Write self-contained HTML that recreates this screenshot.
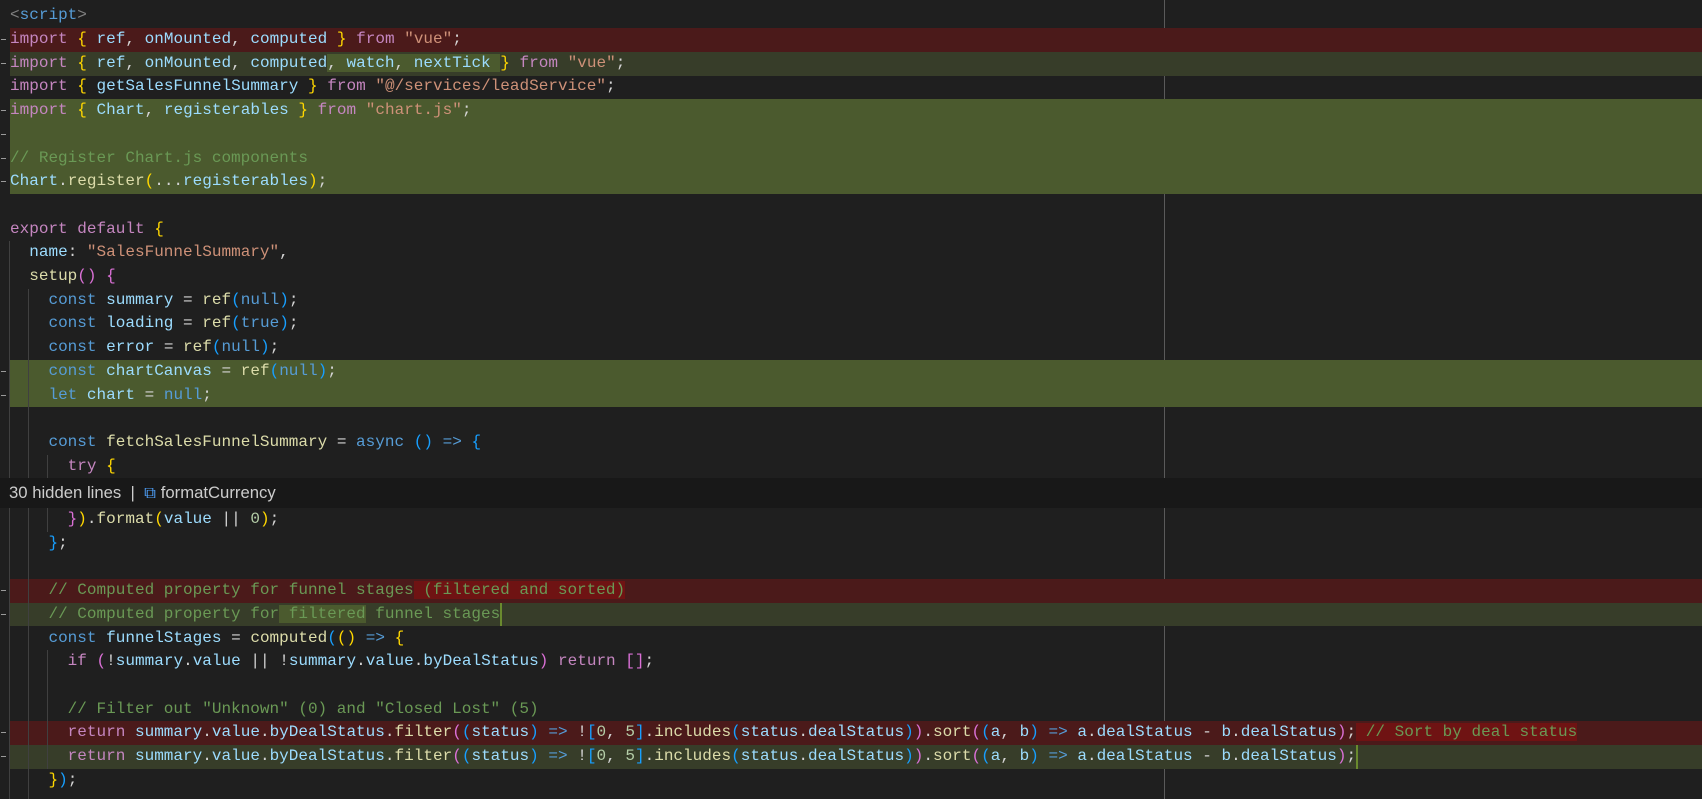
<!DOCTYPE html>
<html><head><meta charset="utf-8"><style>
html,body{margin:0;padding:0;background:#1f1f1f;width:1702px;height:799px;overflow:hidden}
body{position:relative;font-family:"Liberation Mono",monospace;font-size:16.02px;color:#d4d4d4}
.r{position:absolute;left:0;width:1702px;height:24.2px;line-height:23.7px;white-space:pre}
.r .bg{position:absolute;left:10px;right:0;top:0;bottom:0}
.r .t{position:absolute;left:10px;top:0}
.m{position:absolute;left:1px;top:11px;width:5px;height:1px;background:#9a9a9a}
.del .bg{background:#4b1a1a}.add .bg{background:#373d29}.ins .bg{background:#4b5a2e}
.hd{background:#6f1313}.ha{background:#4b5a2e}
.k{color:#c586c0}.b{color:#569cd6}.v{color:#9cdcfe}.f{color:#dcdcaa}.s{color:#ce9178}.c{color:#6a9955}.y{color:#ffd700}.p{color:#da70d6}.l{color:#179fff}.n{color:#b5cea8}.g{color:#808080}
.ig{position:absolute;width:1px;background:#404040}
.cur{display:inline-block;width:2px;height:23.7px;background:#6a8a2e;vertical-align:top}
</style></head><body>
<div class="ig" style="left:1164px;top:0;height:799px;background:#5a5a5a"></div>

<div class="r" style="top:4.3px"><span class="t"><span class="g">&lt;</span><span class="b">script</span><span class="g">&gt;</span></span></div>
<div class="r del" style="top:28px"><span class="m"></span><div class="bg"></div><span class="t"><span class="k">import</span> <span class="y">{</span> <span class="v">ref</span>, <span class="v">onMounted</span>, <span class="v">computed</span> <span class="y">}</span> <span class="k">from</span> <span class="s">"vue"</span>;</span></div>
<div class="r add" style="top:51.7px"><span class="m"></span><div class="bg"></div><span class="t"><span class="k">import</span> <span class="y">{</span> <span class="v">ref</span>, <span class="v">onMounted</span>, <span class="v">computed</span><span class="ha">, <span class="v">watch</span>, <span class="v">nextTick</span> </span><span class="y">}</span> <span class="k">from</span> <span class="s">"vue"</span>;</span></div>
<div class="r" style="top:75.4px"><span class="t"><span class="k">import</span> <span class="y">{</span> <span class="v">getSalesFunnelSummary</span> <span class="y">}</span> <span class="k">from</span> <span class="s">"@/services/leadService"</span>;</span></div>
<div style="position:absolute;left:10px;right:0;top:99px;height:95px;background:#4b5a2e"></div>
<div class="r" style="top:99.1px"><span class="m"></span><span class="t"><span class="k">import</span> <span class="y">{</span> <span class="v">Chart</span>, <span class="v">registerables</span> <span class="y">}</span> <span class="k">from</span> <span class="s">"chart.js"</span>;</span></div>
<div class="r" style="top:122.8px"><span class="m"></span></div>
<div class="r" style="top:146.5px"><span class="m"></span><span class="t"><span class="c">// Register Chart.js components</span></span></div>
<div class="r" style="top:170.2px"><span class="m"></span><span class="t"><span class="v">Chart</span>.<span class="f">register</span><span class="y">(</span>...<span class="v">registerables</span><span class="y">)</span>;</span></div>
<div class="r" style="top:217.6px"><span class="t"><span class="k">export</span> <span class="k">default</span> <span class="y">{</span></span></div>
<div class="r" style="top:241.3px"><span class="t">  <span class="v">name</span>: <span class="s">"SalesFunnelSummary"</span>,</span></div>
<div class="r" style="top:265px"><span class="t">  <span class="f">setup</span><span class="p">()</span> <span class="p">{</span></span></div>
<div class="r" style="top:288.7px"><span class="t">    <span class="b">const</span> <span class="v">summary</span> = <span class="f">ref</span><span class="l">(</span><span class="b">null</span><span class="l">)</span>;</span></div>
<div class="r" style="top:312.4px"><span class="t">    <span class="b">const</span> <span class="v">loading</span> = <span class="f">ref</span><span class="l">(</span><span class="b">true</span><span class="l">)</span>;</span></div>
<div class="r" style="top:336.1px"><span class="t">    <span class="b">const</span> <span class="v">error</span> = <span class="f">ref</span><span class="l">(</span><span class="b">null</span><span class="l">)</span>;</span></div>
<div style="position:absolute;left:10px;right:0;top:360px;height:47.3px;background:#4b5a2e"></div>
<div class="r" style="top:359.8px"><span class="m"></span><span class="t">    <span class="b">const</span> <span class="v">chartCanvas</span> = <span class="f">ref</span><span class="l">(</span><span class="b">null</span><span class="l">)</span>;</span></div>
<div class="r" style="top:383.5px"><span class="m"></span><span class="t">    <span class="b">let</span> <span class="v">chart</span> = <span class="b">null</span>;</span></div>
<div class="r" style="top:430.9px"><span class="t">    <span class="b">const</span> <span class="f">fetchSalesFunnelSummary</span> = <span class="b">async</span> <span class="l">()</span> <span class="b">=&gt;</span> <span class="l">{</span></span></div>
<div class="r" style="top:454.6px"><span class="t">      <span class="k">try</span> <span class="y">{</span></span></div>

<div style="position:absolute;left:0;top:478px;width:1702px;height:30px;background:#181818;font-family:'Liberation Sans',sans-serif;font-size:16.7px;line-height:30px;color:#cccccc;white-space:pre"><span style="position:absolute;left:9px">30 hidden lines  |  <span style="color:#4fa3ff">⧉</span> formatCurrency</span></div>

<div class="r" style="top:508px"><span class="t">      <span class="p">}</span><span class="y">)</span>.<span class="f">format</span><span class="y">(</span><span class="v">value</span> || <span class="n">0</span><span class="y">)</span>;</span></div>
<div class="r" style="top:531.7px"><span class="t">    <span class="l">}</span>;</span></div>
<div class="r del" style="top:579.1px"><span class="m"></span><div class="bg"></div><span class="t">    <span class="c">// Computed property for funnel stages<span class="hd"> (filtered and sorted)</span></span></span></div>
<div class="r add" style="top:602.8px;height:23.7px"><span class="m"></span><div class="bg"></div><span class="t">    <span class="c">// Computed property for<span class="ha"> filtered</span> funnel stages</span><span class="cur"></span></span></div>
<div class="r" style="top:626.5px"><span class="t">    <span class="b">const</span> <span class="v">funnelStages</span> = <span class="f">computed</span><span class="l">(</span><span class="y">()</span> <span class="b">=&gt;</span> <span class="y">{</span></span></div>
<div class="r" style="top:650.2px"><span class="t">      <span class="k">if</span> <span class="p">(</span>!<span class="v">summary</span>.<span class="v">value</span> || !<span class="v">summary</span>.<span class="v">value</span>.<span class="v">byDealStatus</span><span class="p">)</span> <span class="k">return</span> <span class="p">[]</span>;</span></div>
<div class="r" style="top:697.6px"><span class="t">      <span class="c">// Filter out "Unknown" (0) and "Closed Lost" (5)</span></span></div>
<div class="r del" style="top:721.3px"><span class="m"></span><div class="bg"></div><span class="t">      <span class="k">return</span> <span class="v">summary</span>.<span class="v">value</span>.<span class="v">byDealStatus</span>.<span class="f">filter</span><span class="p">(</span><span class="l">(</span><span class="v">status</span><span class="l">)</span> <span class="b">=&gt;</span> !<span class="l">[</span><span class="n">0</span>, <span class="n">5</span><span class="l">]</span>.<span class="f">includes</span><span class="l">(</span><span class="v">status</span>.<span class="v">dealStatus</span><span class="l">)</span><span class="p">)</span>.<span class="f">sort</span><span class="p">(</span><span class="l">(</span><span class="v">a</span>, <span class="v">b</span><span class="l">)</span> <span class="b">=&gt;</span> <span class="v">a</span>.<span class="v">dealStatus</span> - <span class="v">b</span>.<span class="v">dealStatus</span><span class="p">)</span>;<span class="hd"> <span class="c">// Sort by deal status</span></span></span></div>
<div class="r add" style="top:745px;height:23.7px"><span class="m"></span><div class="bg"></div><span class="t">      <span class="k">return</span> <span class="v">summary</span>.<span class="v">value</span>.<span class="v">byDealStatus</span>.<span class="f">filter</span><span class="p">(</span><span class="l">(</span><span class="v">status</span><span class="l">)</span> <span class="b">=&gt;</span> !<span class="l">[</span><span class="n">0</span>, <span class="n">5</span><span class="l">]</span>.<span class="f">includes</span><span class="l">(</span><span class="v">status</span>.<span class="v">dealStatus</span><span class="l">)</span><span class="p">)</span>.<span class="f">sort</span><span class="p">(</span><span class="l">(</span><span class="v">a</span>, <span class="v">b</span><span class="l">)</span> <span class="b">=&gt;</span> <span class="v">a</span>.<span class="v">dealStatus</span> - <span class="v">b</span>.<span class="v">dealStatus</span><span class="p">)</span>;<span class="cur"></span></span></div>
<div class="r" style="top:768.7px"><span class="t">    <span class="y">}</span><span class="l">)</span>;</span></div>

<div class="ig" style="left:9px;top:241px;height:237px"></div>
<div class="ig" style="left:9px;top:508px;height:291px"></div>
<div class="ig" style="left:28px;top:288.7px;height:189px"></div>
<div class="ig" style="left:28px;top:508px;height:291px"></div>
<div class="ig" style="left:47px;top:454.6px;height:23.4px"></div>
<div class="ig" style="left:47px;top:508px;height:23.7px"></div>
<div class="ig" style="left:47px;top:650.2px;height:118.5px"></div>
</body></html>
